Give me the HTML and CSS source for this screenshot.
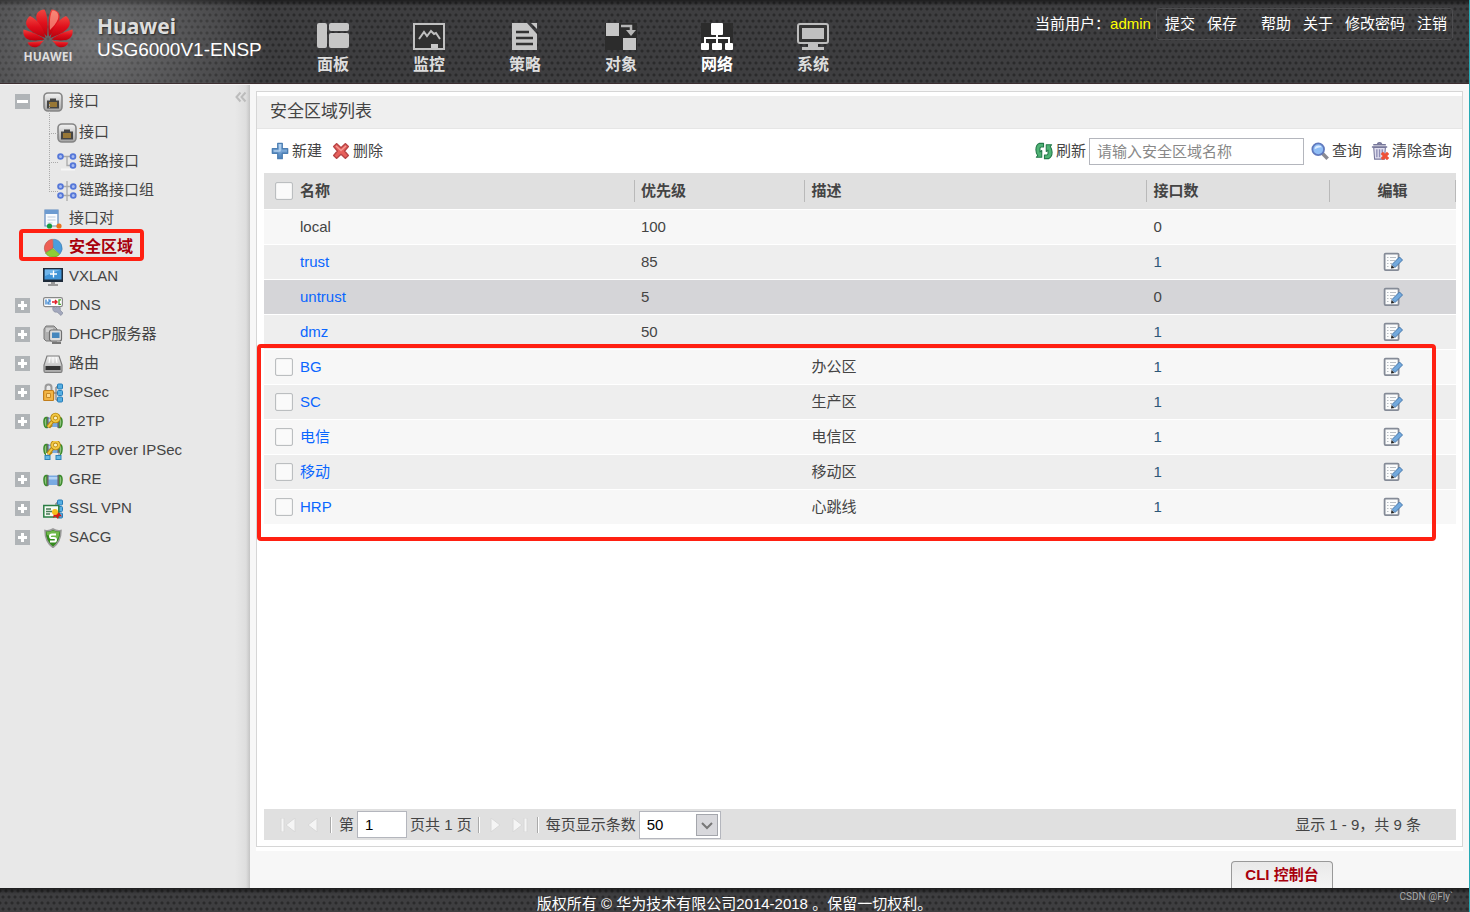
FILE: index.html
```html
<!DOCTYPE html>
<html lang="zh-CN">
<head>
<meta charset="utf-8">
<title>USG6000V1-ENSP</title>
<link rel="stylesheet" href="styles.css">
</head>
<body>
<svg class="sprite" aria-hidden="true">
  <defs>
    <linearGradient id="g-metal" x1="0" y1="0" x2="0" y2="1"><stop offset="0" stop-color="#f4f4f4"/><stop offset="1" stop-color="#a3a3a3"/></linearGradient>
    <linearGradient id="g-blue" x1="0" y1="0" x2="0" y2="1"><stop offset="0" stop-color="#a9cdf0"/><stop offset="1" stop-color="#4a7fb9"/></linearGradient>
    <linearGradient id="g-red" x1="0" y1="0" x2="0" y2="1"><stop offset="0" stop-color="#f0453f"/><stop offset=".5" stop-color="#e0101c"/><stop offset="1" stop-color="#b8000c"/></linearGradient>
  </defs>
  <symbol id="i-port" viewBox="0 0 20 20"><rect x="1" y="1" width="18" height="18" rx="4" fill="url(#g-metal)" stroke="#858585" stroke-width="1.6"/><path d="M4 8.500h3V6.500h6v2h3v8H4z" fill="#444"/><path d="M7 10v5M9 10v5M11 10v5M13 10v5" stroke="#d19a2e" stroke-width="1.200"/></symbol>
  <symbol id="i-link" viewBox="0 0 20 20"><path d="M4 4.500h12M10 4.500V13.500h6" fill="none" stroke="#aaa" stroke-width="1.300"/><path d="M4 17.500h14" stroke="#f6f6f6" stroke-width="2"/><g fill="#aabdf0" stroke="#5577d8" stroke-width="1.800"><circle cx="3.500" cy="4.500" r="2.400"/><circle cx="16" cy="4.500" r="2.400"/><circle cx="16" cy="13.500" r="2.400"/></g></symbol>
  <symbol id="i-linkgroup" viewBox="0 0 20 20"><path d="M10 0v20M4 5.500h12M4 14.500h12" stroke="#aaa" stroke-width="1.300"/><g fill="#aabdf0" stroke="#5577d8" stroke-width="1.800"><circle cx="3.500" cy="5.500" r="2.400"/><circle cx="16.300" cy="5.500" r="2.400"/><circle cx="3.500" cy="14.500" r="2.400"/><circle cx="16.300" cy="14.500" r="2.400"/></g></symbol>
  <symbol id="i-pair" viewBox="0 0 20 20"><path d="M2 1h13v16H2z" fill="#f8fbff" stroke="#5e89bd" stroke-width="1.200"/><path d="M2 1h13v4H2z" fill="#6c9bd1"/><path d="M4.500 8h8M4.500 11h8M4.500 14h5" stroke="#bccbdc"/><path d="M6 17.500h10" stroke="#bbb"/><circle cx="6.500" cy="17" r="2.600" fill="#159a3e"/><circle cx="16" cy="17" r="2.600" fill="#e8731f"/></symbol>
  <symbol id="i-pie" viewBox="0 0 20 20"><path d="M10 10L2.500 14.500A9 9 0 0 1 9.500 1.200z" fill="#ed5f55" stroke="#b44a42" stroke-width=".6"/><path d="M10.500 10V1.200A9 9 0 0 1 17 16z" fill="#4c9ddc" stroke="#3d78aa" stroke-width=".6"/><path d="M10 10.500L16.500 16.500A9 9 0 0 1 2.500 15z" fill="#8fce37" stroke="#5c9620" stroke-width=".6"/></symbol>
  <symbol id="i-screen" viewBox="0 0 20 20"><rect x="0" y="1" width="20" height="14" fill="#1e2b3a"/><rect x="1.500" y="2.500" width="17" height="10" fill="#3f93d6"/><path d="M2 2.500h16L2 9z" fill="#70b5ea"/><path d="M10.500 3.500v7M7 7h7" stroke="#fff" stroke-width="1.300"/><path d="M8 15h4v2h3v2H5v-2h3z" fill="#999"/></symbol>
  <symbol id="i-dns" viewBox="0 0 20 20"><rect x=".6" y="1.600" width="18.800" height="9" rx="1.500" fill="#fff" stroke="#888" stroke-width="1.200"/><path d="M3 3.500v5M5 4h2v2H5v2h3" fill="none" stroke="#2677c9" stroke-width="1.200"/><path d="M9 6h4M12 4l2 2-2 2" fill="none" stroke="#e21e28" stroke-width="1.400"/><path d="M18 3.800h-2v4.500h2" fill="none" stroke="#49a528" stroke-width="1.300"/><path d="M10 11l3 1 1-1.500c3 0 4 2 3 3.500l3 3-2 2.500-4-3.500c-3 1-5-2-4-5z" fill="#a3a8bd" stroke="#7e8498" stroke-width=".6"/></symbol>
  <symbol id="i-dhcp" viewBox="0 0 20 20"><path d="M3 1h8l3 3v12H3L1 14V4z" fill="#b0b0b0" stroke="#777"/><path d="M3 4h7M3 6h4" stroke="#eee"/><rect x="6.500" y="5" width="12" height="11" rx="2" fill="#ddd" stroke="#707070" stroke-width="1.200"/><rect x="9" y="7.500" width="7.500" height="5.500" fill="#4687bd"/><path d="M9 18h9" stroke="#777" stroke-width="2"/></symbol>
  <symbol id="i-router" viewBox="0 0 20 20"><path d="M4 2h12l3 9v6q0 1.500-1.500 1.500h-15Q1 18.500 1 17v-6z" fill="url(#g-metal)" stroke="#7c7c7c" stroke-width="1.200"/><path d="M2.500 12h15v4h-15z" fill="#333"/><path d="M7 3l-1 6M10 3v6M13 3l1 6" stroke="#fff"/></symbol>
  <symbol id="i-boxes" viewBox="0 0 20 20"><path d="M11 10h3M13 4v13M13 4h2M13 17h2" fill="none" stroke="#888" stroke-width="1.300"/><g fill="#55aee2" stroke="#267cb8"><rect x="14.500" y="1" width="5" height="5" rx="1"/><rect x="14.500" y="7.500" width="5" height="5" rx="1"/><rect x="14.500" y="14" width="5" height="5" rx="1"/></g></symbol>
  <symbol id="i-ipsec" viewBox="0 0 20 20"><use href="#i-boxes"/><path d="M2.500 8V4.500q0-3 3-3t3 3V8" fill="none" stroke="#999" stroke-width="2"/><rect x=".6" y="7.500" width="10" height="10" rx="1" fill="#f2b544" stroke="#c27e1c" stroke-width="1.200"/><path d="M3.500 10.500h4v4h-4z" fill="#ffd98a" stroke="#c98a28"/></symbol>
  <symbol id="i-tunnel" viewBox="0 0 20 20"><path d="M5 5.500h10v9.500H5z" fill="#79aae2"/><path d="M5 7h10v2.500H5z" fill="#b4d3f5"/><path d="M4 5.500H3Q.7 6 1 10.500t2 5h1zM16 5.500h1q2.300.5 2 5t-2 5h-1z" fill="#8fc37f" stroke="#3b8a2b" stroke-width="1.500"/><path d="M4.800 5v11M15.200 5v11" stroke="#666" stroke-width="1.500"/></symbol>
  <symbol id="i-key" viewBox="0 0 20 20"><path d="M10.500 8l-5.500 7M6 12.500l2.500 2.500" stroke="#b8860f" stroke-width="3.800"/><path d="M10.500 8l-5.500 7" stroke="#f2c945" stroke-width="2"/><circle cx="12.500" cy="6" r="3.400" fill="#fbf1c4" stroke="#b8860f" stroke-width="3.600"/><circle cx="12.500" cy="6" r="3.400" fill="none" stroke="#f2c945" stroke-width="2"/></symbol>
  <symbol id="i-l2tp" viewBox="0 0 20 20"><use href="#i-tunnel"/><use href="#i-key"/></symbol>
  <symbol id="i-l2tpsec" viewBox="0 0 20 20"><use href="#i-tunnel" y="-2"/><path d="M3 12h14v2H3z" fill="#e8e8e8"/><path d="M5 11v4M16 11v4" stroke="#888"/><g fill="#65b9e4" stroke="#2c83b7"><rect x="2" y="14.500" width="5" height="4"/><rect x="13" y="14.500" width="5" height="4"/></g><use href="#i-key" y="-2"/></symbol>
  <symbol id="i-ssl" viewBox="0 0 20 20"><use href="#i-boxes"/><rect x=".8" y="6.500" width="15" height="11.500" fill="#f5fbf3" stroke="#2a7e43" stroke-width="1.500"/><path d="M3 10h5M3 12.500h6M3 15h4" stroke="#477a55" stroke-width="1.500"/><path d="M11 14l-1 5 2.500-1.500L15 20l1-3 3 .5-3-4z" fill="#d31c17"/><circle cx="12" cy="13" r="3" fill="#f6be1c"/></symbol>
  <symbol id="i-shield" viewBox="0 0 20 20"><path d="M10 1q4 2.500 8 1.500 0 11-8 17Q2 14 2 2.500q4 1 8-1.500z" fill="#348a1d" stroke="#999" stroke-width="1.500"/><path d="M10 2.500q3 1.500 6.500 1.300-.3 4-1.700 7L4 7l-.5-3Q7 4 10 2.500z" fill="#70b84a"/><path d="M13 6.500H9q-2 0-2 1.800T9 10h2q2 0 2 1.800t-2 1.700H7" fill="none" stroke="#fff" stroke-width="2"/></symbol>
  <symbol id="i-edit" viewBox="0 0 20 20"><rect x="1.600" y="1.600" width="14" height="16.500" rx="1" fill="#fbfcfc" stroke="#858b97" stroke-width="1.800"/><path d="M4 5.500h1.500M7 5.500h6M4 8.500h1.500M7 8.500h5M4 11.500h1.500M7 11.500h2M4 14.500h1.500" stroke="#b9bec4" stroke-width="1.200"/><path d="M9 12.500l7.500-7.500 3 3L12 15.500z" fill="#72a9dd" stroke="#4477ab"/><path d="M8.500 13l3 3-3.500.5z" fill="#222"/></symbol>
  <symbol id="i-add" viewBox="0 0 20 20"><path d="M7.500 1.500h5v6h6v5h-6v6h-5v-6h-6v-5h6z" fill="url(#g-blue)" stroke="#4d7fb3" stroke-width="1.500" stroke-linejoin="round"/><path d="M10 3v7H3.500" fill="none" stroke="#c8e0f7" stroke-width="1.200"/></symbol>
  <symbol id="i-del" viewBox="0 0 20 20"><path d="M5 1.800L10 6.300 15 1.800 18.200 5 14 10l4.200 5-3.200 3.200-5-4.500-5 4.500L1.800 15 6 10 1.800 5z" fill="#e7605c" stroke="#b64445" stroke-width="1.500" stroke-linejoin="round"/><path d="M4.500 4.500L10 9.500l5.500-5" fill="none" stroke="#f49b94" stroke-width="1.400"/></symbol>
  <symbol id="i-refresh" viewBox="0 0 20 20"><g fill="#4fb274" stroke="#24794a" stroke-width="1.200" stroke-linejoin="round"><path d="M5 1.500h4.500v4H7q-1.500 0-1.500 2V11l2-1.500V17H1.500L3 15Q1 12 1 8.500 1 3 5 1.500z"/><path d="M15 18.500h-4.500v-4H13q1.500 0 1.500-2V9l-2 1.500V3h6L17 5q2 3 2 6.500 0 5.500-4 7z"/></g></symbol>
  <symbol id="i-search" viewBox="0 0 20 20"><path d="M12.500 12.500l6 6" stroke="#8a8a92" stroke-width="4"/><circle cx="8" cy="8" r="6.500" fill="#8fbdf5" stroke="#6079bd" stroke-width="2"/><path d="M4 8q0-4 4.500-4 3 0 3.500 2-3-.5-8 2z" fill="#dcecff"/></symbol>
  <symbol id="i-trash" viewBox="0 0 20 20"><path d="M3 6h13l-1 13H4z" fill="#e0deee" stroke="#78789d" stroke-width="1.200"/><path d="M6.500 8v9M9.500 8v9M12.500 8v5" stroke="#8d8db5" stroke-width="1.500"/><path d="M1 5.500h17M2.500 3h14M7 2q2.500-2 5 0" fill="none" stroke="#77779a" stroke-width="1.700"/><path d="M12 12l7 7M19 12l-7 7" stroke="#ee5138" stroke-width="3.600"/></symbol>
  <symbol id="n-panel" viewBox="0 0 32 27"><g fill="#c6c6c6"><rect width="10" height="25" rx="2"/><rect x="12" width="20" height="8" rx="2"/><rect x="12" y="10" width="20" height="15" rx="2"/></g></symbol>
  <symbol id="n-monitor" viewBox="0 0 32 27"><rect x="1" y="1" width="30" height="25" fill="#303030" stroke="#c0c0c0" stroke-width="2"/><path d="M6 16l5-7 3 4 4-5 3 3 2-1 4 6" fill="none" stroke="#c0c0c0" stroke-width="2"/><path d="M18 21h7v4h-7z" fill="#c6c6c6"/></symbol>
  <symbol id="n-policy" viewBox="0 0 32 27"><path d="M3 0h15l10 11v16H3z" fill="#c6c6c6"/><path d="M22 0h6v6z" fill="#c6c6c6"/><path d="M7 9h13M7 15h17M7 21h17" stroke="#333" stroke-width="2.500"/></symbol>
  <symbol id="n-object" viewBox="0 0 32 27"><path fill="#2c2c2c" d="M0 0h32v27H0z"/><path d="M1 0h13v13H1zM18 15h13v12H18z" fill="#c6c6c6"/><path d="M16 3h10v5" fill="none" stroke="#b5b5b5" stroke-width="2.500"/><path d="M21 7h10l-5 6z" fill="#b5b5b5"/></symbol>
  <symbol id="n-network" viewBox="0 0 32 27"><path fill="#2c2c2c" d="M0 0h32v27H0z"/><path d="M16 10v11M4 21v-6h24v6" fill="none" stroke="#fff" stroke-width="2"/><g fill="#fff"><rect x="10" width="12" height="12" rx="1"/><rect y="20" width="8" height="7" rx="1"/><rect x="11" y="20" width="10" height="7" rx="1"/><rect x="24" y="20" width="8" height="7" rx="1"/></g></symbol>
  <symbol id="n-system" viewBox="0 0 32 27"><rect x="1" y="1" width="30" height="19" rx="2" fill="#343434" stroke="#bdbdbd" stroke-width="2"/><path d="M5 5h22v11H5zM11 20h10v4h6v3H5v-3h6z" fill="#c0c0c0"/></symbol>
</svg>

<header class="topbar mesh">
  <div class="brand">
    <div class="logo">
      <svg class="logo-mark" viewBox="0 0 100 80" aria-hidden="true">
        <g fill="url(#g-red)">
          <path id="petal-a" d="M48 55C50 38 50 12 43 1 30 2 25 10 27 20 30 35 40 46 48 55z"/>
          <path id="petal-b" d="M45 58C42 42 32 22 14 14 4 22 4 32 12 40 22 50 36 54 45 58z"/>
          <path id="petal-c" d="M43 61C30 50 15 45 1 41-1 52 5 61 14 62 24 64 36 62 43 61z"/>
          <path id="petal-d" d="M42 63C30 65 20 66 9 67 14 78 27 79 33 73 36 69 39 66 42 63z"/>
          <g transform="matrix(-1 0 0 1 100 0)"><use href="#petal-a"/><use href="#petal-b"/><use href="#petal-c"/><use href="#petal-d"/></g>
        </g>
        <path d="M54 42C53 26 54 10 59 3 70 4 72 12 70 20 67 28 60 36 54 42z" fill="#ffb59c" opacity=".6"/>
      </svg>
      <span class="logo-word">HUAWEI</span>
    </div>
    <div class="product"><span class="vendor">Huawei</span><span class="model">USG6000V1-ENSP</span></div>
  </div>
  <nav class="mainnav" aria-label="主菜单">
    <a href="#"><svg><use href="#n-panel"/></svg>面板</a>
    <a href="#"><svg><use href="#n-monitor"/></svg>监控</a>
    <a href="#"><svg><use href="#n-policy"/></svg>策略</a>
    <a href="#"><svg><use href="#n-object"/></svg>对象</a>
    <a href="#" class="current"><svg><use href="#n-network"/></svg>网络</a>
    <a href="#"><svg><use href="#n-system"/></svg>系统</a>
  </nav>
  <div class="account">
    <span>当前用户：<span class="user">admin</span></span>
    <div class="account-links">
      <a href="#">提交</a><a href="#">保存</a><a href="#" class="apart">帮助</a><a href="#">关于</a><a href="#">修改密码</a><a href="#">注销</a>
    </div>
  </div>
</header>

<main class="body">
  <aside class="sidebar">
    <button class="collapse" type="button" aria-label="收起"><svg viewBox="0 0 12 12"><path d="M5.500 1.500L1.500 6l4 4.500M10.500 1.500L6.500 6l4 4.500"/></svg></button>
    <ul class="tree">
      <li><button class="toggle open" type="button" aria-label="折叠"></button><a href="#"><svg><use href="#i-port"/></svg>接口</a></li>
      <li class="branch">
        <ul>
          <li><a href="#"><svg><use href="#i-port"/></svg>接口</a></li>
          <li><a href="#"><svg><use href="#i-link"/></svg>链路接口</a></li>
          <li><a href="#"><svg><use href="#i-linkgroup"/></svg>链路接口组</a></li>
        </ul>
      </li>
      <li><a href="#"><svg><use href="#i-pair"/></svg>接口对</a></li>
      <li class="selected"><a href="#"><svg><use href="#i-pie"/></svg>安全区域</a><span class="mark"></span></li>
      <li><a href="#"><svg><use href="#i-screen"/></svg>VXLAN</a></li>
      <li><button class="toggle" type="button" aria-label="展开"></button><a href="#"><svg><use href="#i-dns"/></svg>DNS</a></li>
      <li><button class="toggle" type="button" aria-label="展开"></button><a href="#"><svg><use href="#i-dhcp"/></svg>DHCP服务器</a></li>
      <li><button class="toggle" type="button" aria-label="展开"></button><a href="#"><svg><use href="#i-router"/></svg>路由</a></li>
      <li><button class="toggle" type="button" aria-label="展开"></button><a href="#"><svg><use href="#i-ipsec"/></svg>IPSec</a></li>
      <li><button class="toggle" type="button" aria-label="展开"></button><a href="#"><svg><use href="#i-l2tp"/></svg>L2TP</a></li>
      <li><a href="#"><svg><use href="#i-l2tpsec"/></svg>L2TP over IPSec</a></li>
      <li><button class="toggle" type="button" aria-label="展开"></button><a href="#"><svg><use href="#i-tunnel"/></svg>GRE</a></li>
      <li><button class="toggle" type="button" aria-label="展开"></button><a href="#"><svg><use href="#i-ssl"/></svg>SSL VPN</a></li>
      <li><button class="toggle" type="button" aria-label="展开"></button><a href="#"><svg><use href="#i-shield"/></svg>SACG</a></li>
    </ul>
  </aside>

  <div class="content">
    <section class="panel">
      <h1>安全区域列表</h1>
      <div class="toolbar">
        <button type="button"><svg><use href="#i-add"/></svg>新建</button>
        <button type="button"><svg><use href="#i-del"/></svg>删除</button>
        <div class="search">
          <button type="button"><svg><use href="#i-refresh"/></svg>刷新</button>
          <input type="text" placeholder="请输入安全区域名称" aria-label="安全区域名称">
          <button type="button"><svg><use href="#i-search"/></svg>查询</button>
          <button type="button"><svg><use href="#i-trash"/></svg>清除查询</button>
        </div>
      </div>
      <div class="grid">
        <table>
          <colgroup><col class="c-check"><col class="c-name"><col class="c-prio"><col class="c-desc"><col class="c-count"><col></colgroup>
          <thead><tr><th><input type="checkbox" aria-label="全选"></th><th><span>名称</span></th><th><span>优先级</span></th><th><span>描述</span></th><th><span>接口数</span></th><th class="edit"><span>编辑</span></th></tr></thead>
          <tbody>
            <tr><td></td><td>local</td><td>100</td><td></td><td>0</td><td></td></tr>
            <tr><td></td><td><a href="#">trust</a></td><td>85</td><td></td><td class="n">1</td><td class="edit"><button type="button" aria-label="编辑 trust"><svg><use href="#i-edit"/></svg></button></td></tr>
            <tr class="hover"><td></td><td><a href="#">untrust</a></td><td>5</td><td></td><td>0</td><td class="edit"><button type="button" aria-label="编辑 untrust"><svg><use href="#i-edit"/></svg></button></td></tr>
            <tr><td></td><td><a href="#">dmz</a></td><td>50</td><td></td><td class="n">1</td><td class="edit"><button type="button" aria-label="编辑 dmz"><svg><use href="#i-edit"/></svg></button></td></tr>
            <tr><td><input type="checkbox" aria-label="选择 BG"></td><td><a href="#">BG</a></td><td></td><td>办公区</td><td class="n">1</td><td class="edit"><button type="button" aria-label="编辑 BG"><svg><use href="#i-edit"/></svg></button></td></tr>
            <tr><td><input type="checkbox" aria-label="选择 SC"></td><td><a href="#">SC</a></td><td></td><td>生产区</td><td class="n">1</td><td class="edit"><button type="button" aria-label="编辑 SC"><svg><use href="#i-edit"/></svg></button></td></tr>
            <tr><td><input type="checkbox" aria-label="选择 电信"></td><td><a href="#">电信</a></td><td></td><td>电信区</td><td class="n">1</td><td class="edit"><button type="button" aria-label="编辑 电信"><svg><use href="#i-edit"/></svg></button></td></tr>
            <tr><td><input type="checkbox" aria-label="选择 移动"></td><td><a href="#">移动</a></td><td></td><td>移动区</td><td class="n">1</td><td class="edit"><button type="button" aria-label="编辑 移动"><svg><use href="#i-edit"/></svg></button></td></tr>
            <tr><td><input type="checkbox" aria-label="选择 HRP"></td><td><a href="#">HRP</a></td><td></td><td>心跳线</td><td class="n">1</td><td class="edit"><button type="button" aria-label="编辑 HRP"><svg><use href="#i-edit"/></svg></button></td></tr>
          </tbody>
        </table>
        <span class="mark"></span>
      </div>
      <div class="pager">
        <button type="button" aria-label="首页"><svg viewBox="0 0 16 14"><path d="M1 0h3v14H1zM15 0v14L6 7z"/></svg></button>
        <button type="button" aria-label="上一页"><svg viewBox="0 0 16 14"><path d="M12 0v14L3 7z"/></svg></button>
        <span class="sep"></span>
        <label class="page-label" for="page">第</label><input id="page" type="text" value="1"><span class="total">页共 1 页</span>
        <span class="sep"></span>
        <button type="button" aria-label="下一页"><svg viewBox="0 0 16 14"><path d="M4 0v14l9-7z"/></svg></button>
        <button type="button" aria-label="末页"><svg viewBox="0 0 16 14"><path d="M12 0h3v14h-3zM1 0v14l9-7z"/></svg></button>
        <span class="sep"></span>
        <label class="page-label" for="size">每页显示条数</label>
        <span class="select"><select id="size"><option>50</option></select><svg viewBox="0 0 22 22" aria-hidden="true"><rect x=".5" y=".5" width="21" height="21"/><path d="M6 9l5 5 5-5"/></svg></span>
        <span class="summary">显示 1 - 9，共 9 条</span>
      </div>
    </section>
    <div class="dock"><button type="button">CLI 控制台</button></div>
  </div>
</main>

<footer class="footer mesh">版权所有 © 华为技术有限公司2014-2018 。保留一切权利。<span class="credit">CSDN @Fly`</span></footer>
</body>
</html>
```
FILE: styles.css
```css
* { box-sizing: border-box; }

body {
  margin: 0;
  min-height: 100vh;
  display: flex;
  flex-direction: column;
  border-right: 1px solid #27aab5;
  background: #f7f7f7;
  color: #444;
  font: 15px/20px "Liberation Sans", "Noto Sans CJK SC", sans-serif;
}

a { color: inherit; text-decoration: none; }
ul { list-style: none; margin: 0; padding: 0; }
button, input, select { font: inherit; color: inherit; margin: 0; }
button { padding: 0; border: 0; background: none; cursor: pointer; }
.sprite { position: absolute; width: 0; height: 0; }

.mesh {
  background-color: #3e3e40;
  background-image:
    linear-gradient(#0008, #0000 6px),
    radial-gradient(circle, #2a2a2b 1px, #2a2a2b00 2px),
    radial-gradient(circle, #2a2a2b 1px, #2a2a2b00 2px);
  background-size: auto, 6px 12px, 6px 12px;
  background-position: 0 0, 0 3px, 3px 9px;
}

/* top bar */
.topbar { height: 84px; display: flex; flex: none; color: #fff; border-bottom: 1px solid #3d2f31; }
.brand {
  width: 285px;
  display: flex;
  padding: 9px 0 0 22px;
  background: radial-gradient(ellipse 180px 130px at 90px 42px, #ffffff44, #fff0);
}
.logo { width: 52px; display: flex; flex-direction: column; align-items: center; }
.logo-mark { width: 50px; height: 40px; }
.logo-word { font: bold 12px/14px "Open Sans", sans-serif; color: #ddd; margin-top: 1px; }
.product { display: flex; flex-direction: column; padding: 5px 0 0 23px; }
.vendor { font: bold 21px/24px "Noto Sans", sans-serif; color: #ddd; text-shadow: 1px 1px 2px #222; }
.model { font-size: 19px; line-height: 24px; white-space: nowrap; }
.mainnav { display: flex; padding-top: 23px; }
.mainnav a {
  width: 96px;
  display: flex;
  flex-direction: column;
  align-items: center;
  gap: 4px;
  font-size: 16px;
  line-height: 22px;
  font-weight: bold;
  color: #ddd;
}
.mainnav svg { width: 32px; height: 27px; }
.mainnav .current { color: #fff; }
.account { margin-left: auto; padding: 8px 16px 0 0; display: flex; line-height: 32px; white-space: nowrap; }
.user { color: #ff0; }
.account-links {
  height: 32px;
  margin-left: 5px;
  padding: 0 5px 0 8px;
  display: flex;
  gap: 12px;
  border: 1px solid #4c4c4e;
  border-radius: 3px;
  line-height: 30px;
}
.account-links .apart { margin-left: 12px; }

/* layout */
.body { flex: 1; display: flex; }
.sidebar {
  position: relative;
  width: 250px;
  flex: none;
  padding-top: 2px;
  border-top: 1px solid #f4f4f4;
  background: linear-gradient(90deg, #e8e8e8 235px, #dedede 246px, #c4c4c4);
}
.content { flex: 1; min-width: 0; padding: 7px 6px 0; display: flex; flex-direction: column; }

/* tree */
.collapse { position: absolute; top: 3px; right: 3px; width: 12px; height: 14px; }
.collapse svg { width: 12px; height: 12px; fill: none; stroke: #bcbcbc; stroke-width: 2; }
.tree li { position: relative; display: flex; align-items: center; min-height: 29px; padding-left: 15px; }
.tree a { margin-left: auto; width: 207px; display: flex; align-items: center; gap: 6px; line-height: 26px; padding-bottom: 2px; }
.tree a svg { width: 20px; height: 20px; margin-top: 2px; flex: none; }
.toggle {
  width: 15px;
  height: 15px;
  background:
    linear-gradient(#fff, #fff) center / 9px 3px no-repeat,
    linear-gradient(#fff, #fff) center / 3px 9px no-repeat,
    #b0b4b7;
}
.toggle.open { background: linear-gradient(#fff, #fff) center / 11px 3px no-repeat, #b0b4b7; }
.tree .branch { padding: 2px 0 0 49px; margin-bottom: -1px; }
.branch ul { flex: 1; }
.branch li { padding-left: 8px; }
.branch li::before {
  content: "";
  position: absolute;
  left: 0;
  top: -14px;
  width: 8px;
  height: 29px;
  border: dotted #aaa;
  border-width: 0 0 1px 1px;
}
.tree .branch a { margin-left: 0; width: auto; gap: 2px; }
.selected { color: #a8000c; font-size: 16px; font-weight: bold; }
.mark { position: absolute; border: 4px solid #ff2012; border-radius: 4px; pointer-events: none; }
.selected .mark { left: 19px; top: -4px; width: 125px; height: 32px; }

/* panel */
.panel { flex: 1; display: flex; flex-direction: column; background: #fff; border: 1px solid #d6d6d6; box-shadow: 0 4px 0 #fff; }
.panel h1 {
  margin: 4px 0 0;
  padding: 0 13px;
  font-size: 17px;
  line-height: 32px;
  font-weight: normal;
  background: #efefef;
  border-bottom: 1px solid #e6e6e6;
}
.toolbar { height: 44px; padding: 0 10px 0 14px; display: flex; align-items: center; gap: 10px; }
.toolbar button { display: flex; align-items: center; gap: 3px; white-space: nowrap; }
.toolbar svg { width: 18px; height: 18px; }
.search { margin-left: auto; display: flex; align-items: center; }
.search input { width: 215px; height: 27px; margin: 0 7px 0 3px; padding: 0 7px; border: 1px solid #b4b6bd; background: #fff; }
.search input::placeholder { color: #888; }
.search button + button { margin-left: 9px; }

/* zone table */
.grid { position: relative; margin: 0 6px 0 7px; flex: 1; }
table { width: 100%; table-layout: fixed; border-collapse: collapse; }
.c-check { width: 36px; }
.c-name { width: 28.1%; }
.c-prio { width: 14.3%; }
.c-desc { width: 28.7%; }
.c-count { width: 15.3%; }
th { height: 36px; padding: 0; background: #e0e0e0; border-bottom: 1px solid #fff; text-align: left; }
th span { display: block; line-height: 22px; border-right: 1px solid #b9b9b9; }
th.edit, td.edit { text-align: center; }
th:nth-child(n+3), td:nth-child(n+3) { padding-left: 6px; }
th.edit, td.edit { padding-left: 0; }
td { height: 35px; padding: 0; background: #f7f7f7; border-bottom: 1px solid #fff; }
tr:nth-child(even) td { background: #eee; }
tr.hover td { background: #d5d5d8; }
td a { color: #0a66ff; }
.n { color: #2d5878; }
td button, td svg { display: block; width: 20px; height: 20px; }
td button { margin: 0 auto; }
input[type="checkbox"] {
  appearance: none;
  display: block;
  width: 18px;
  height: 18px;
  margin-left: 11px;
  border: 1px solid #bbbec0;
  border-radius: 2px;
  background: #fafafa;
  box-shadow: inset 0 0 1px #bbb;
}
.grid .mark { left: -7px; right: 20px; top: 171px; height: 197px; }

/* pager */
.pager { margin: 0 6px 6px 7px; height: 31px; padding: 0 35px 0 16px; display: flex; align-items: center; background: #e0e0e0; white-space: nowrap; }
.pager button { width: 16px; height: 18px; margin-right: 9px; }
.pager button svg { display: block; width: 16px; height: 14px; fill: #f5f5f5; stroke: #d8d8d8; stroke-width: 1; }
.sep { width: 2px; height: 16px; margin-right: 7px; background: linear-gradient(90deg, #aaa 50%, #fff 50%); }
.pager input { width: 50px; height: 27px; margin: 0 3px; padding: 0 7px; border: 1px solid #b4b6bd; background: #fff; color: #000; }
.total { margin-right: 6px; }
.select { position: relative; display: flex; margin-left: 3px; }
.select select { appearance: none; width: 82px; height: 28px; padding: 0 7px; border: 1px solid #b4b6bd; border-radius: 0; background: #fff; color: #000; }
.select svg { position: absolute; right: 3px; top: 3px; width: 22px; height: 22px; fill: #d8d8dc; stroke: #a4a6ac; pointer-events: none; }
.select path { fill: none; stroke: #777; stroke-width: 2; }
.summary { margin-left: auto; }

/* console dock and footer */
.dock { height: 41px; flex: none; display: flex; justify-content: flex-end; align-items: flex-end; padding-right: 130px; }
.dock button {
  height: 27px;
  width: 102px;
  border: 1px solid #999;
  border-bottom: 0;
  border-radius: 4px 4px 0 0;
  background: linear-gradient(#e9e9e9, #f4f4f4);
  color: #a8000c;
  font-weight: bold;
}
.footer { position: relative; height: 24px; padding-top: 6px; flex: none; overflow: hidden; text-align: center; color: #fff; }
.credit { position: absolute; right: 16px; top: 2px; font: 10px/14px Roboto, sans-serif; color: #aaa; }
```
